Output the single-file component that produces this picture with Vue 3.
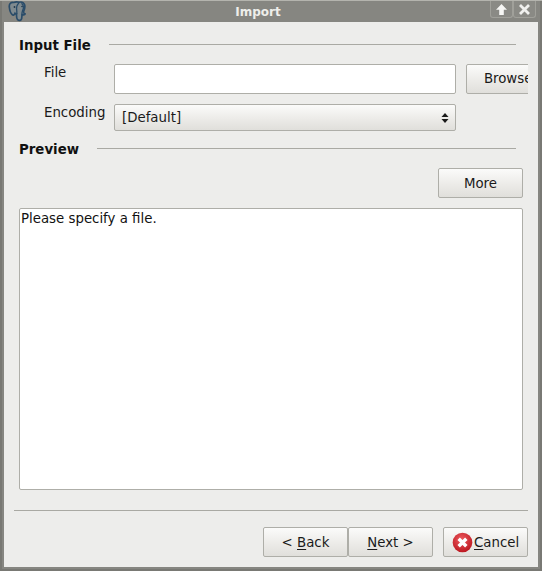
<template>
  <div class="window">
    <header class="titlebar">
      <svg class="logo" width="21" height="21" viewBox="0 0 21 21">
        <path d="M5.500 1.500C2.500 1.200 1 3 1.300 6c.3 2.800 1.400 6.300 2.900 7.700 1 .9 2.100.2 2.800-1.400.5.500 1 .7 1.600.7-.2 2.400 0 4.600 1 5.700 1.400 1.300 3.500.9 4-1 .3-1.200.3-2.600.4-3.900 1.600.4 3.200-.1 3-1-1.400-.4-1.700-1.400-1.200-2.900.8-2 1.500-4.500.7-6.300-1-2.200-3.500-2.900-5.500-2.300C9.300.7 7.300.900 5.500 1.500Z" fill="#7f8a8f" stroke="#2a4c69" stroke-width="1.700" />
        <path d="M11 2C8.800 3.800 8.300 6.500 8.700 9c.2 1.400.2 2.700 0 4M13.500 2.300c2.300 2 2.300 5 1 7.500-.6 1.300-.6 2.800-.4 4.500" fill="none" stroke="#2a4c69" stroke-width="1.300" />
        <circle cx="6.500" cy="6" r="0.900" fill="#20384d" />
        <circle cx="14" cy="5.500" r="0.800" fill="#20384d" />
      </svg>
      <span class="title">Import</span>
      <div class="win-buttons">
        <span class="win-btn">
          <svg width="13" height="13" viewBox="0 0 13 13"><path d="M6.500 1 12 6.800H8.800V12H4.200V6.800H1Z" fill="#f6f6f4" /></svg>
        </span>
        <span class="win-btn">
          <svg width="13" height="13" viewBox="0 0 13 13"><path d="M2 2 11 11M11 2 2 11" stroke="#f0f0ee" stroke-width="2.800" /></svg>
        </span>
      </div>
    </header>

    <main class="content">
      <div class="section-head first">
        <h2>Input File</h2>
        <span class="rule"></span>
      </div>

      <div class="field-row file-row">
        <label>File</label>
        <div class="text-input"></div>
        <button class="btn browse">Browse...</button>
      </div>

      <div class="field-row encoding-row">
        <label>Encoding</label>
        <div class="select">
          <span>[Default]</span>
          <svg width="8" height="12" viewBox="0 0 8 12"><path d="M4 1 7.500 5H.5ZM4 11 .5 7h7Z" fill="#1a1a1a" /></svg>
        </div>
      </div>

      <div class="section-head preview">
        <h2>Preview</h2>
        <span class="rule"></span>
      </div>

      <div class="more-row">
        <button class="btn more">More</button>
      </div>

      <div class="preview-box">Please specify a file.</div>

      <div class="separator"></div>

      <div class="actions">
        <button class="btn wizard">&lt; <u>B</u>ack</button>
        <button class="btn wizard"><u>N</u>ext &gt;</button>
        <button class="btn cancel">
          <svg width="21" height="21" viewBox="0 0 22 22">
            <defs>
              <radialGradient id="cancelRed" cx="0.450" cy="0.350" r="0.700">
                <stop offset="0" stop-color="#ee5b60" />
                <stop offset="1" stop-color="#b8131c" />
              </radialGradient>
            </defs>
            <circle cx="11" cy="11" r="10.300" fill="url(#cancelRed)" />
            <path d="M7 7 15 15M15 7 7 15" stroke="#fff" stroke-width="3.600" />
          </svg>
          <span><u>C</u>ancel</span>
        </button>
      </div>
    </main>
  </div>
</template>

<script setup>
</script>

<style>
html,
body {
  margin: 0;
  background: #868681;
}
</style>

<style scoped>
.window {
  width: 542px;
  height: 571px;
  box-sizing: border-box;
  display: flex;
  flex-direction: column;
  padding: 0 4px 4px;
  background: #868681;
  border-top: 1px solid #b4b4ae;
  box-shadow: inset 2px 0 0 #797974, inset -2px 0 0 #797974, inset 0 -2px 0 #797974;
  font-family: "DejaVu Sans", sans-serif;
  font-size: 13.33px;
  color: #1a1a1a;
  overflow: hidden;
}
.titlebar {
  height: 21px;
  flex: none;
  display: flex;
  align-items: center;
}
.logo {
  flex: none;
  margin-left: 4px;
}
.title {
  flex: 1;
  padding-right: 3px;
  text-align: center;
  font-size: 12px;
  font-weight: bold;
  color: #eeeeea;
}
.win-buttons {
  flex: none;
  margin-right: 2px;
  display: flex;
  align-self: flex-start;
}
.win-btn {
  width: 23px;
  height: 17px;
  box-sizing: border-box;
  display: flex;
  align-items: center;
  justify-content: center;
  border: 1px solid #a0a09a;
  border-top: none;
  border-radius: 0 0 3px 3px;
  background: #8a8a85;
}
.content {
  flex: 1;
  min-height: 0;
  background: #ededeb;
  padding: 0 10px;
  display: flex;
  flex-direction: column;
  overflow: hidden;
}
.section-head {
  display: flex;
  align-items: center;
  margin-right: 12px;
  padding-left: 5px;
  height: 17px;
}
.section-head.first {
  margin-top: 15px;
}
.section-head.preview {
  margin-top: 10px;
}
h2 {
  margin: 0;
  font-size: 13.33px;
  font-weight: bold;
  line-height: 17px;
  color: #111;
}
.rule {
  flex: 1;
  height: 1px;
  margin-top: -2px;
  margin-left: 18px;
  background: #a9a9a3;
}
.field-row {
  display: flex;
  padding-left: 30px;
}
.file-row {
  margin-top: 10px;
  height: 30px;
  overflow: hidden;
}
.encoding-row {
  margin-top: 10px;
  height: 27px;
}
label {
  width: 70px;
  flex: none;
  line-height: 17px;
}
.text-input {
  width: 342px;
  height: 30px;
  box-sizing: border-box;
  flex: none;
  background: #fff;
  border: 1px solid #aeaea8;
  border-radius: 2px;
}
.btn {
  box-sizing: border-box;
  height: 30px;
  padding: 0;
  font: inherit;
  color: #1a1a1a;
  background: linear-gradient(#fbfbfa, #ecebe8 55%, #e0dfdb);
  border: 1px solid #aeaea8;
  border-radius: 2px;
}
.browse {
  width: 97px;
  flex: none;
  margin-left: 10px;
  padding-bottom: 2px;
}
.select {
  width: 342px;
  height: 27px;
  box-sizing: border-box;
  flex: none;
  display: flex;
  align-items: center;
  justify-content: space-between;
  padding: 0 6px 0 7px;
  background: linear-gradient(#fbfbfa, #ecebe8 55%, #e0dfdb);
  border: 1px solid #aeaea8;
  border-radius: 2px;
}
.more-row {
  display: flex;
  justify-content: flex-end;
  margin-top: 10px;
  margin-right: 5px;
}
.more {
  width: 85px;
}
.preview-box {
  height: 282px;
  box-sizing: border-box;
  flex: none;
  margin: 10px 5px 0 5px;
  padding: 1px 1px;
  background: #fff;
  border: 1px solid #aeaea8;
  border-radius: 2px;
  line-height: 17px;
  color: #111;
}
.separator {
  height: 1px;
  flex: none;
  margin-top: 20px;
  background: #a9a9a3;
}
.actions {
  display: flex;
  justify-content: flex-end;
  margin-top: 16px;
}
.wizard {
  width: 85px;
}
.cancel {
  width: 85px;
  margin-left: 10px;
  display: flex;
  align-items: center;
  padding-left: 8px;
  gap: 1px;
}
u {
  text-underline-offset: 2px;
}
</style>
